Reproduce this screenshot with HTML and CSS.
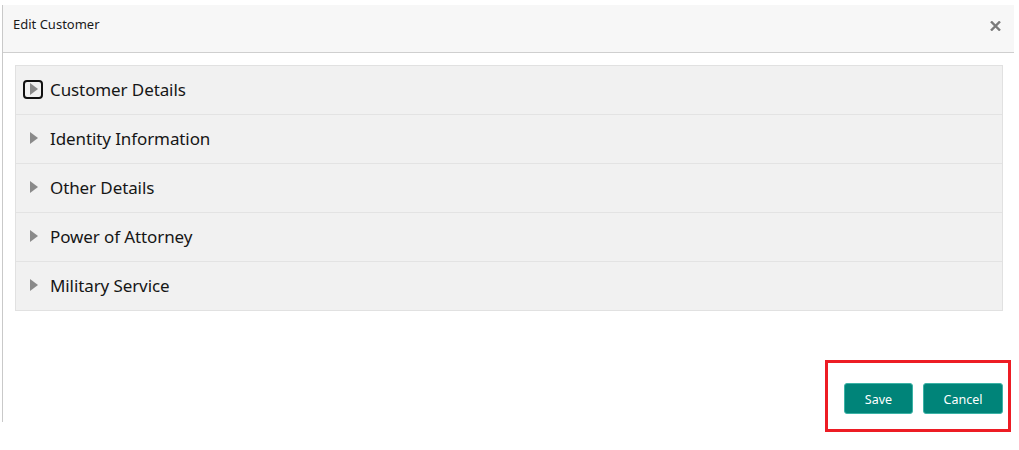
FILE: index.html
```html
<!DOCTYPE html>
<html>
<head>
<meta charset="utf-8">
<link rel="stylesheet" href="styles.css">
</head>
<body>
<div class="dialog">
  <div class="header">
    <span class="title">Edit Customer</span>
    <svg class="close" width="11" height="10" viewBox="0 0 11 10"><path d="M1 0.5 L10 9.5 M10 0.5 L1 9.5" stroke="#7a7a7a" stroke-width="2.4" fill="none"/></svg>
  </div>
  <div class="content">
    <div class="accordion">
      <div class="row"><span class="icon focused"><span class="tri"></span></span><span class="label">Customer Details</span></div>
      <div class="row"><span class="icon"><span class="tri"></span></span><span class="label">Identity Information</span></div>
      <div class="row"><span class="icon"><span class="tri"></span></span><span class="label">Other Details</span></div>
      <div class="row"><span class="icon"><span class="tri"></span></span><span class="label">Power of Attorney</span></div>
      <div class="row"><span class="icon"><span class="tri"></span></span><span class="label">Military Service</span></div>
    </div>
  </div>
  <div class="footer">
    <button class="btn">Save</button>
    <button class="btn cancel">Cancel</button>
  </div>
</div>
<div class="highlight"></div>
</body>
</html>
```
FILE: styles.css
```css
html, body {
  margin: 0;
  padding: 0;
  background: #fff;
}
body {
  font-family: "Noto Sans", "Open Sans", sans-serif;
  position: relative;
  width: 1019px;
  height: 450px;
  overflow: hidden;
}
.dialog {
  margin: 5px 0 0 2px;
  width: 1012px;
  height: 417px;
  border-left: 1px solid #c9c9c9;
  display: flex;
  flex-direction: column;
  box-sizing: border-box;
}
.header {
  height: 48px;
  box-sizing: border-box;
  background: #f7f7f7;
  border-bottom: 1px solid #cfcfcf;
  display: flex;
  justify-content: space-between;
  align-items: flex-start;
  padding: 10px 13px 0 10px;
}
.title {
  font-size: 13px;
  line-height: 18px;
  color: #1a1a1a;
}
.close {
  display: block;
  margin-top: 6px;
}
.content {
  padding: 12px 0 0 12px;
}
.accordion {
  width: 988px;
  box-sizing: border-box;
  border: 1px solid #e1e1e1;
  background: #f1f1f1;
}
.row {
  height: 49px;
  box-sizing: border-box;
  border-bottom: 1px solid #e3e3e3;
  display: flex;
  align-items: center;
  padding-left: 7px;
  padding-bottom: 2px;
}
.row:last-child {
  border-bottom: none;
  height: 48px;
}
.icon {
  width: 20px;
  height: 19px;
  box-sizing: border-box;
  display: flex;
  align-items: center;
  justify-content: center;
  margin-right: 7px;
  border: 2px solid transparent;
  border-radius: 4px;
  padding-left: 1px;
}
.icon.focused {
  border-color: #111;
}
.tri {
  width: 0;
  height: 0;
  border-top: 6px solid transparent;
  border-bottom: 6px solid transparent;
  border-left: 8px solid #8a8a8a;
}
.label {
  font-size: 17px;
  color: #161616;
  letter-spacing: -0.1px;
}
.footer {
  margin-top: auto;
  display: flex;
  justify-content: flex-end;
  gap: 10px;
  padding: 0 11px 8px 0;
}
.btn {
  height: 31px;
  width: 69px;
  box-sizing: border-box;
  background: #008479;
  border: 1px solid #3bb3a6;
  border-radius: 3px;
  color: #fff;
  font-family: "Noto Sans", "Open Sans", sans-serif;
  font-size: 12.5px;
  padding: 2px 0 0 0;
}
.btn.cancel {
  width: 80px;
}
.highlight {
  position: absolute;
  left: 825px;
  top: 360px;
  width: 186px;
  height: 72px;
  box-sizing: border-box;
  border: 3px solid #ed1c24;
}
```
